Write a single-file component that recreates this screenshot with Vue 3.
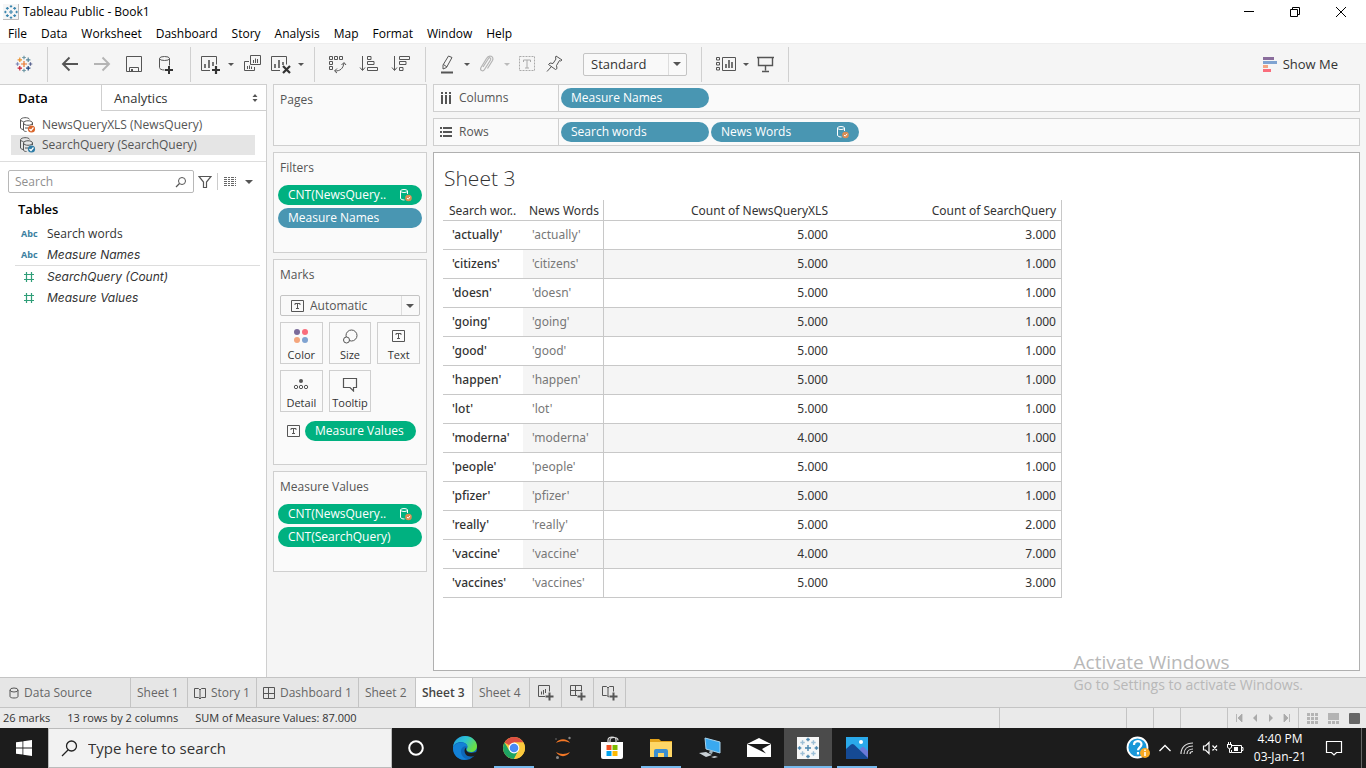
<script setup>
import { ref } from 'vue'

const menus = ['File', 'Data', 'Worksheet', 'Dashboard', 'Story', 'Analysis', 'Map', 'Format', 'Window', 'Help']
const fit = ref('Standard')
const markType = ref('Automatic')
const search = ref('')
const taskSearch = ref('')

const rows = [
  ['actually', '5.000', '3.000'],
  ['citizens', '5.000', '1.000'],
  ['doesn', '5.000', '1.000'],
  ['going', '5.000', '1.000'],
  ['good', '5.000', '1.000'],
  ['happen', '5.000', '1.000'],
  ['lot', '5.000', '1.000'],
  ['moderna', '4.000', '1.000'],
  ['people', '5.000', '1.000'],
  ['pfizer', '5.000', '1.000'],
  ['really', '5.000', '2.000'],
  ['vaccine', '4.000', '7.000'],
  ['vaccines', '5.000', '3.000']
]

const sheets = [
  { name: 'Sheet 1' },
  { name: 'Story 1', icon: 'story' },
  { name: 'Dashboard 1', icon: 'dashboard' },
  { name: 'Sheet 2' },
  { name: 'Sheet 3', active: true },
  { name: 'Sheet 4' }
]

const logo = [
  { x: 12, y: 12, r: 3, c: '#e8762c' },
  { x: 12, y: 5.5, r: 1.8, c: '#7199a6' },
  { x: 12, y: 18.5, r: 1.8, c: '#7199a6' },
  { x: 5.5, y: 12, r: 1.8, c: '#7b84b5' },
  { x: 18.5, y: 12, r: 1.8, c: '#5b6591' },
  { x: 7.8, y: 7.8, r: 2.2, c: '#eb912b' },
  { x: 16.2, y: 7.8, r: 2.2, c: '#59879b' },
  { x: 7.8, y: 16.2, r: 2.2, c: '#c72035' },
  { x: 16.2, y: 16.2, r: 2.2, c: '#1f447e' }
]
const wideLogo = logo.map((p) => ({ ...p, x: 12 + (p.x - 12) * 1.3, y: 12 + (p.y - 12) * 1.3 }))
const plus = (p) => `M${p.x - p.r} ${p.y}h${p.r * 2}M${p.x} ${p.y - p.r}v${p.r * 2}`
</script>

<template>
  <div class="window">
    <header class="titlebar">
      <svg class="app-icon" viewBox="0 0 24 24" width="16" height="16"><path d="M0 0h23v23H0z" fill="#f6f6f6" /><path d="M0 23.300h23.300V0" fill="none" stroke="#b5b5b5" stroke-width="1.400" /><path v-for="(p, i) in wideLogo" :key="i" :d="plus(p)" stroke="#3b86ae" stroke-width="1.700" /></svg>
      <h1>Tableau Public - Book1</h1>
      <div class="win-buttons">
        <button aria-label="Minimize"><svg viewBox="0 0 12 12" width="12" height="12"><path d="M1 5.500h10" stroke="#000" /></svg></button>
        <button aria-label="Restore"><svg viewBox="0 0 12 12" width="12" height="12"><path d="M1.500 3.500h7v7h-7zM3.500 3.500v-2h7v7h-2" fill="none" stroke="#000" /></svg></button>
        <button aria-label="Close"><svg viewBox="0 0 12 12" width="12" height="12"><path d="M1 1l10 10M11 1L1 11" stroke="#000" /></svg></button>
      </div>
    </header>

    <nav class="menubar"><button v-for="m in menus" :key="m">{{ m }}</button></nav>

    <div class="toolbar">
      <div class="group start">
        <button class="tool" aria-label="Start page"><svg viewBox="0 0 24 24"><path v-for="(p, i) in logo" :key="i" :d="plus(p)" :stroke="p.c" stroke-width="1.2" /></svg></button>
      </div>
      <div class="group even">
        <button class="tool" aria-label="Undo"><svg viewBox="0 0 24 24"><path d="M20 12H5M11.500 5.500L5 12l6.500 6.500" class="l" stroke-width="1.900" /></svg></button>
        <button class="tool" aria-label="Redo"><svg viewBox="0 0 24 24"><path d="M4 12h15M12.500 5.500L19 12l-6.500 6.500" fill="none" stroke="#b4b4b4" stroke-width="1.900" /></svg></button>
        <button class="tool" aria-label="Save"><svg viewBox="0 0 24 24"><path d="M4.500 4.500h15v15h-15zM7.500 19.500v-4h9v4" class="l" /><path d="M9 17h2v3H9z" fill="#555" /></svg></button>
        <button class="tool" aria-label="New data source"><svg viewBox="0 0 24 24"><path d="M5.500 6.500v9c0 1.500 2 2.500 5 2.500M15.500 6.500v7M5.500 6.500a5 2 0 0 0 10 0a5 2 0 0 0-10 0z" class="l" /><path d="M15 14v8M11 18h8" stroke="#333" stroke-width="2" /></svg></button>
      </div>
      <div class="group sheets-tools">
        <button class="tool" aria-label="New worksheet"><svg viewBox="0 0 24 24"><path d="M12 18.500H3.500v-14h15v8" class="l" /><path d="M7 12v4M11 8v8M15 10v4" stroke="#555" stroke-width="1.600" /><path d="M18 14v8M14 18h8" stroke="#333" stroke-width="2.200" /></svg></button>
        <button class="caret" aria-label="New worksheet options"></button>
        <button class="tool" aria-label="Duplicate"><svg viewBox="0 0 24 24"><path d="M10.500 3.500h10v9h-10zM9 9.500H4.500v9h10V15" class="l" /><path d="M13.500 8v3M15.500 6.500V11M17.500 7v4M7.500 14v3M9.500 13.500V17M11.500 14.500V17" stroke="#555" /></svg></button>
        <button class="tool" aria-label="Clear sheet"><svg viewBox="0 0 24 24"><path d="M12 18.500H3.500v-14h15v8" class="l" /><path d="M7 12v4M11 8v8M15 10v3" stroke="#555" stroke-width="1.600" /><path d="M15 14l7 7M22 14l-7 7" stroke="#333" stroke-width="2.200" /></svg></button>
        <button class="caret" aria-label="Clear options"></button>
      </div>
      <div class="group even">
        <button class="tool" aria-label="Swap rows and columns"><svg viewBox="0 0 24 24"><path d="M4.500 4.500h3v3h-3zM9.500 4.500h3v3h-3zM14.500 4.500h3v3h-3zM4.500 9.500h3v3h-3zM4.500 14.500h3v3h-3zM10 19c5 0 8-2 9-8M16.500 13l2.500-2.500 2 2.500M12 16.500L9.500 19l2.500 2" class="l" /></svg></button>
        <button class="tool" aria-label="Sort ascending"><svg viewBox="0 0 24 24"><path d="M5.500 4v14M3 15.500L5.500 18.500 8 15.500M10.500 4.500H14v3h-3.500zM10.500 9.500H17v3h-6.500zM10.500 15.500H20.500v3h-10z" class="l" /></svg></button>
        <button class="tool" aria-label="Sort descending"><svg viewBox="0 0 24 24"><path d="M5.500 4v14M3 15.500L5.500 18.500 8 15.500M10.500 4.500H20.500v3h-10zM10.500 9.500H17v3h-6.500zM10.500 15.500H14v3h-3.500z" class="l" /></svg></button>
      </div>
      <div class="group format-tools">
        <button class="tool" aria-label="Highlight"><svg viewBox="0 0 24 24"><path d="M13.500 4l3.500 1.500-5.500 10-3.500 1.500v-4zM8.500 12.500l3.500 2.500" class="l" /><path d="M6 20.500h12" stroke="#555" stroke-width="2" /></svg></button>
        <button class="caret" aria-label="Highlight options"></button>
        <button class="tool" aria-label="Group members"><svg viewBox="0 0 24 24"><path d="M8 15l5.500-8.500c1-1.500 3-.500 2 1.500l-6 9.500c-1.500 2.500-5 1-3.500-2L11.500 6.500c2.500-4.500 8-2 6 2l-5 8" fill="none" stroke="#b4b4b4" stroke-width="1.200" /></svg></button>
        <button class="caret dim" aria-label="Group options"></button>
        <button class="tool" aria-label="Show mark labels"><svg viewBox="0 0 24 24"><path d="M4.500 4.500h15v14h-15z" fill="none" stroke="#aaa" stroke-dasharray="2 1" /><path d="M8.500 10V8h7v2M12 8v8M10 16h4" fill="none" stroke="#aaa" /></svg></button>
        <button class="tool" aria-label="Fix axes"><svg viewBox="0 0 24 24"><path d="M14 4l6 4-1.500 1-1-.500-3 5 .500 3-1.500 1-7-5 1.500-1.500 3 .500 3-4.500-.500-1zM9.500 14.500L5 19.500" class="l" /></svg></button>
        <label class="combo fit"><select v-model="fit" aria-label="Fit"><option>Standard</option><option>Entire View</option></select></label>
      </div>
      <div class="group view-tools">
        <button class="tool wide" aria-label="Show cards"><svg viewBox="0 0 26 24"><path d="M3.500 5.500h3v2.500h-3zM3.500 10.500h3V13h-3zM3.500 15.500h3V18h-3zM9.500 5.500h13v13h-13z" class="l" /><path d="M13 12v4M16 8v8M19 10v6" stroke="#555" stroke-width="1.600" /></svg></button>
        <button class="caret" aria-label="Card options"></button>
        <button class="tool" aria-label="Presentation mode"><svg viewBox="0 0 24 24"><path d="M4 5.500h17M5.500 5.500v8h14v-8M12.500 13.500v5M9 19.500h7" class="l" stroke-width="1.400" /></svg></button>
      </div>
      <button class="show-me"><svg viewBox="0 0 14 15" width="14" height="15"><path d="M0 0h11v3H0z" fill="#8a6d9c" /><path d="M0 4h14v3H0z" fill="#7fa3d1" /><path d="M0 8h5v3H0z" fill="#f4a582" /><path d="M0 12h8v3H0z" fill="#fa6d7c" /></svg>Show Me</button>
    </div>

    <main class="workspace">
      <aside class="data-pane">
        <div class="pane-tabs">
          <button class="on">Data</button>
          <button class="off">Analytics<svg viewBox="0 0 6 8" width="6" height="8"><path d="M3 0l2.500 3h-5zM3 8l2.500-3h-5z" fill="#555" /></svg></button>
        </div>
        <div class="sources">
          <button v-for="(s, i) in ['NewsQueryXLS (NewsQuery)', 'SearchQuery (SearchQuery)']" :key="s" :class="{ selected: i === 1 }">
            <svg viewBox="0 0 18 18" width="18" height="18"><path d="M4 13.500C2.500 13 1.500 12.500 1.500 12V4c0-3 9-3 9-.500M1.500 4c.500 1 2 1.500 3 1.500M4.500 7c0-3 9-3 9 0s-9 3-9 0zM4.500 7v7c0 1 1.500 1.500 3 1.500M13.500 7v2M6 12h3" fill="none" stroke="#555" /><circle cx="12.500" cy="13" r="3.600" :fill="i ? '#2e7ca6' : '#d9652b'" /><path d="M10.500 13l1.500 1.500 2.500-3" fill="none" stroke="#fff" stroke-width="1.200" /></svg>{{ s }}
          </button>
        </div>
        <div class="find">
          <div class="find-box">
            <input v-model="search" type="text" placeholder="Search" aria-label="Search fields" />
            <svg viewBox="0 0 12 12" width="12" height="12"><circle cx="7" cy="5" r="3.500" fill="none" stroke="#555" /><path d="M4.500 7.500L1 11" stroke="#555" stroke-width="1.300" /></svg>
          </div>
          <button class="funnel" aria-label="Filter"><svg viewBox="0 0 14 14" width="14" height="14"><path d="M1 1.500h12L8.500 7v5.500h-3V7z" fill="none" stroke="#555" stroke-width="1.200" /></svg></button>
          <button class="list-view" aria-label="View"><svg viewBox="0 0 12 11" width="12" height="11"><path d="M0 1.500h12M0 3.500h12M0 5.500h12M0 7.500h12M0 9.500h12" stroke="#666" stroke-dasharray="3 1 2 1" /></svg></button>
          <button class="caret" aria-label="View options"></button>
        </div>
        <h2>Tables</h2>
        <ul class="fields">
          <li><b class="abc">Abc</b>Search words</li>
          <li><b class="abc">Abc</b><i>Measure Names</i></li>
        </ul>
        <ul class="fields measures">
          <li v-for="f in ['SearchQuery (Count)', 'Measure Values']" :key="f">
            <svg viewBox="0 0 16 12" width="16" height="12"><path d="M3 3.500h10M3 8.500h10M5.500 1v10M10.500 1v10" stroke="#2f9e78" stroke-width="1.200" /></svg><i>{{ f }}</i>
          </li>
        </ul>
      </aside>

      <section class="cards">
        <div class="card pages"><h3>Pages</h3></div>
        <div class="card filters">
          <h3>Filters</h3>
          <div class="pills">
            <button class="pill green">CNT(NewsQuery..<svg viewBox="0 0 14 14" width="14" height="14"><path d="M1.500 3v7c0 1.500 2 2 4 2M8.500 3v3M1.500 3a3.500 1.500 0 0 0 7 0a3.500 1.500 0 0 0-7 0z" fill="none" stroke="#fff" /><circle cx="9.500" cy="10" r="3.300" fill="#d98d54" /><path d="M8 10l1.200 1.200 2-2.400" fill="none" stroke="#fff" /></svg></button>
            <button class="pill blue">Measure Names</button>
          </div>
        </div>
        <div class="card marks">
          <h3>Marks</h3>
          <label class="combo mark-type">
            <svg class="t-icon" viewBox="0 0 13 12" width="13" height="12"><path d="M.500.500h12v11H.500zM4 5V3.500h5V5M6.500 3.500v5M5 8.500h3" class="l" /></svg>
            <select v-model="markType" aria-label="Mark type"><option>Automatic</option><option>Text</option></select>
          </label>
          <div class="mark-grid">
            <button><svg viewBox="0 0 18 16"><circle cx="5" cy="4" r="3" fill="#7b6b9a" /><circle cx="13" cy="4" r="3" fill="#fa6d7c" /><circle cx="5" cy="12" r="3" fill="#f4a57c" /><circle cx="13" cy="12" r="3" fill="#7fa3d1" /></svg>Color</button>
            <button><svg viewBox="0 0 18 16"><circle cx="10.500" cy="7.500" r="5.500" class="l" /><circle cx="5.500" cy="12" r="3" fill="#fafafa" stroke="#555" /></svg>Size</button>
            <button><svg viewBox="0 0 18 16"><path d="M2.500 2.500h12v11h-12zM6 7V5.500h5V7M8.500 5.500v5M7 10.500h3" class="l" /></svg>Text</button>
            <button><svg viewBox="0 0 18 16"><circle cx="9" cy="5" r="2" fill="#555" /><circle cx="4" cy="11" r="1.700" class="l" /><circle cx="9" cy="11" r="1.700" class="l" /><circle cx="14" cy="11" r="1.700" class="l" /></svg>Detail</button>
            <button><svg viewBox="0 0 18 16"><path d="M2.500 2.500h13v9h-3v3.500L9 11.500H2.500z" class="l" stroke-width="1.200" /></svg>Tooltip</button>
          </div>
          <div class="mark-row">
            <svg class="t-icon" viewBox="0 0 13 12" width="13" height="12"><path d="M.500.500h12v11H.500zM4 5V3.500h5V5M6.500 3.500v5M5 8.500h3" class="l" /></svg>
            <button class="pill green">Measure Values</button>
          </div>
        </div>
        <div class="card filters">
          <h3>Measure Values</h3>
          <div class="pills">
            <button class="pill green">CNT(NewsQuery..<svg viewBox="0 0 14 14" width="14" height="14"><path d="M1.500 3v7c0 1.500 2 2 4 2M8.500 3v3M1.500 3a3.500 1.500 0 0 0 7 0a3.500 1.500 0 0 0-7 0z" fill="none" stroke="#fff" /><circle cx="9.500" cy="10" r="3.300" fill="#d98d54" /><path d="M8 10l1.200 1.200 2-2.400" fill="none" stroke="#fff" /></svg></button>
            <button class="pill green">CNT(SearchQuery)</button>
          </div>
        </div>
      </section>

      <section class="canvas">
        <div class="shelf">
          <div class="shelf-name"><svg viewBox="0 0 12 12" width="12" height="12"><path d="M2 0v12M6 0v12M10 0v12" stroke="#555" stroke-width="2" /><path d="M0 2.500h12" stroke="#fafafa" /></svg>Columns</div>
          <button class="pill blue">Measure Names</button>
        </div>
        <div class="shelf">
          <div class="shelf-name"><svg viewBox="0 0 12 12" width="12" height="12"><path d="M0 2h12M0 6h12M0 10h12" stroke="#555" stroke-width="2" /><path d="M2.500 0v12" stroke="#fafafa" /></svg>Rows</div>
          <button class="pill blue">Search words</button>
          <button class="pill blue">News Words<svg viewBox="0 0 14 14" width="14" height="14"><path d="M1.500 3v7c0 1.500 2 2 4 2M8.500 3v3M1.500 3a3.500 1.500 0 0 0 7 0a3.500 1.500 0 0 0-7 0z" fill="none" stroke="#fff" /><circle cx="9.500" cy="10" r="3.300" fill="#d98d54" /><path d="M8 10l1.200 1.200 2-2.400" fill="none" stroke="#fff" /></svg></button>
        </div>
        <div class="sheet">
          <h2>Sheet 3</h2>
          <table>
            <colgroup><col class="c-word" /><col class="c-news" /><col class="c-num" /><col class="c-num" /></colgroup>
            <thead><tr><th>Search wor..</th><th>News Words</th><th>Count of NewsQueryXLS</th><th>Count of SearchQuery</th></tr></thead>
            <tbody>
              <tr v-for="r in rows" :key="r[0]"><th scope="row">'{{ r[0] }}'</th><td>'{{ r[0] }}'</td><td>{{ r[1] }}</td><td>{{ r[2] }}</td></tr>
            </tbody>
          </table>
        </div>
      </section>
    </main>

    <nav class="sheet-tabs">
      <button class="source"><svg viewBox="0 0 10 12" width="10" height="12"><path d="M1 3v6.500c0 2 8 2 8 0V3M1 3a4 2 0 0 0 8 0a4 2 0 0 0-8 0z" class="l" /></svg>Data Source</button>
      <button v-for="s in sheets" :key="s.name" :class="{ active: s.active }">
        <svg v-if="s.icon === 'story'" viewBox="0 0 12 12" width="12" height="12"><path d="M.500 1.500h4L6 3l1.500-1.500h4v9h-4L6 12l-1.500-1.500h-4zM6 3v9" class="l" /></svg>
        <svg v-if="s.icon === 'dashboard'" viewBox="0 0 12 12" width="12" height="12"><path d="M.500.500h11v11H.500zM5.500.500v11M.500 6.500h11" class="l" /></svg>{{ s.name }}
      </button>
      <button class="new" aria-label="New worksheet"><svg viewBox="0 0 16 16" width="16" height="16"><path d="M7 11.500H.500v-11h11v6M3.500 6.500v3M5.500 5v4.500M7.500 4v4" class="l" /><path d="M11.500 7.500v8M7.500 11.500h8" stroke="#555" stroke-width="2" /></svg></button>
      <button class="new" aria-label="New dashboard"><svg viewBox="0 0 16 16" width="16" height="16"><path d="M7 10.500H.500V.500h11v6M5.500.500v10M.500 5.500h11" class="l" /><path d="M11.500 7.500v8M7.500 11.500h8" stroke="#555" stroke-width="2" /></svg></button>
      <button class="new" aria-label="New story"><svg viewBox="0 0 16 16" width="16" height="16"><path d="M7 12L4.500 10.500h-4v-9h4L6 3l1.500-1.500h4v5M6 3v8" class="l" /><path d="M11.500 7.500v8M7.500 11.500h8" stroke="#555" stroke-width="2" /></svg></button>
    </nav>

    <footer class="status">
      <span>26 marks</span><span>13 rows by 2 columns</span><span>SUM of Measure Values: 87.000</span>
      <div class="slots"><i class="s1"></i><i class="s2"></i><i class="s2"></i><i class="s3"></i></div>
      <div class="pager">
        <button aria-label="First"><svg viewBox="0 0 8 8"><path d="M1.500 0v8M7 0L3 4l4 4z" fill="#aaa" stroke="#aaa" stroke-width=".800" /></svg></button>
        <button aria-label="Previous"><svg viewBox="0 0 8 8"><path d="M6 0L2 4l4 4z" fill="#aaa" /></svg></button>
        <button aria-label="Next"><svg viewBox="0 0 8 8"><path d="M2 0l4 4-4 4z" fill="#aaa" /></svg></button>
        <button aria-label="Last"><svg viewBox="0 0 8 8"><path d="M6.500 0v8M1 0l4 4-4 4z" fill="#aaa" stroke="#aaa" stroke-width=".800" /></svg></button>
      </div>
      <div class="views">
        <button aria-label="Sheet sorter"><svg viewBox="0 0 11 11"><path d="M0 1.500h11M0 5.500h11M0 9.500h11" stroke="#b4b4b4" stroke-width="3" stroke-dasharray="3 1" /></svg></button>
        <button aria-label="Filmstrip"><svg viewBox="0 0 11 11"><path d="M0 0h11v7H0z" fill="#b4b4b4" /><path d="M0 9.500h11" stroke="#b4b4b4" stroke-width="3" stroke-dasharray="3 1" /></svg></button>
        <button aria-label="Show tabs"><svg viewBox="0 0 11 11"><rect width="11" height="11" rx="1" fill="#666" /></svg></button>
      </div>
    </footer>

    <footer class="taskbar">
      <button class="win" aria-label="Start"><svg viewBox="0 0 16 16" width="16" height="16"><path d="M0 2.300L6.500 1.400v6.200H0zM7.300 1.300L16 0v7.600H7.300zM0 8.400h6.500v6.200L0 13.700zM7.300 8.400H16V16l-8.700-1.300z" fill="#fff" /></svg></button>
      <label class="task-search">
        <svg viewBox="0 0 17 17" width="17" height="17"><circle cx="10.500" cy="6" r="5" fill="none" stroke="#222" stroke-width="1.300" /><path d="M7 10L1 16" stroke="#222" stroke-width="1.300" /></svg>
        <input v-model="taskSearch" type="text" placeholder="Type here to search" aria-label="Type here to search" />
      </label>
      <div class="apps">
        <button class="cortana" aria-label="Cortana"><svg viewBox="0 0 24 24"><circle cx="12" cy="12" r="6.800" fill="none" stroke="#fff" stroke-width="2" /></svg></button>
        <button aria-label="Edge"><svg viewBox="0 0 24 24">
          <defs><linearGradient id="eg" x1="0" y1="0" x2="1" y2=".500"><stop offset="0" stop-color="#2699dc" /><stop offset=".500" stop-color="#2cc3d5" /><stop offset="1" stop-color="#6be043" /></linearGradient></defs>
          <circle cx="12" cy="12" r="12" fill="#0e67b8" />
          <path d="M0 11C1 4 6 0 12 0c7 0 12 5 12 10 0 4-3 6-6 6-3 0-4.500-1-4.500-2.200 0-.800 1-1.200 1-3C14.500 8 11 6 7.500 6 4 6 1 8.500 0 11z" fill="url(#eg)" />
          <path d="M0 11C2 8 5 6.500 8 6.500c3.500 0 6.500 2 6.500 4.500-2-2-7 0-6.500 5 .300 3.500 3 7 7 7-9 3-15.500-4-15-12z" fill="#1381d6" />
          <path d="M24 18.500c-2 1.500-4 2-6.500 2-4 0-6-3-6-6 0-1 .500-2 1.500-3-.500 5 4 7 11 4z" fill="#1d1d1d" /></svg></button>
        <button class="running" aria-label="Chrome"><svg viewBox="0 0 24 24">
          <circle cx="12" cy="12" r="11" fill="#fbc93d" /><path d="M12 12L2.500 6.500A11 11 0 0 1 21.500 6.500H12z" fill="#dd4f42" /><path d="M2.500 6.500A11 11 0 0 0 12 23l4.500-8.500L12 12 7 14z" fill="#1ea463" /><path d="M21.500 6.500H12v5l4.500 3L12 23A11 11 0 0 0 21.500 6.500z" fill="#fbc93d" /><circle cx="12" cy="12" r="5.400" fill="#fff" /><circle cx="12" cy="12" r="4.300" fill="#4a8af4" /></svg></button>
        <button aria-label="Jupyter"><svg viewBox="0 0 24 24"><path d="M5 7c3-5 11-5 14 0-4-2.500-10-2.500-14 0zM5 16c4 2.500 10 2.500 14 0-3 5.500-11 5.500-14 0z" fill="#f37726" /><circle cx="18.500" cy="2" r="1.200" fill="#888" /><circle cx="5" cy="3" r=".800" fill="#777" /><circle cx="6.500" cy="21.500" r="1.500" fill="#888" /></svg></button>
        <button aria-label="Store"><svg viewBox="0 0 24 24"><path d="M1 6h22v15a2 2 0 0 1-2 2H3a2 2 0 0 1-2-2z" fill="#fff" /><path d="M8 7V4c0-4 8-4 8 0v3M10 7V4.500c0-4 8-4 8 0" fill="none" stroke="#ddd" stroke-width="1.200" /><path d="M6.500 9h5v5h-5z" fill="#f25022" /><path d="M12.500 9h5v5h-5z" fill="#7fba00" /><path d="M6.500 15h5v5h-5z" fill="#00a4ef" /><path d="M12.500 15h5v5h-5z" fill="#ffb900" /></svg></button>
        <button class="running" aria-label="File Explorer"><svg viewBox="0 0 24 24"><path d="M1 3h9l2 2h11v16H1z" fill="#e3a21a" /><path d="M1 6h22v15H1z" fill="#ffd766" /><path d="M5 21v-6a2 2 0 0 1 2-2h10a2 2 0 0 1 2 2v6h-4v-4H9v4z" fill="#3c8fd0" /></svg></button>
        <button aria-label="Remote computer"><svg viewBox="0 0 24 24"><path d="M7 2l15 4v11L8 13z" fill="#3aa9f0" stroke="#a9d4ee" /><path d="M12 14l3 1-1 3-3-1z" fill="#9fb0bb" /><path d="M1 17l7-1 6 3-6 2zM13 21l4-1 3 1-4 1z" fill="#c9d0d5" /></svg></button>
        <button aria-label="Mail"><svg viewBox="0 0 24 24"><path d="M0 8l12-6 12 6v13H0z" fill="#fff" /><path d="M0 8h24l-9 5 4 4.500z" fill="#1b1b1b" /></svg></button>
        <button class="current" aria-label="Tableau"><svg viewBox="0 0 24 24"><path d="M1 1h22v22H1z" fill="#f7f7f7" /><path v-for="(p, i) in wideLogo" :key="i" :d="plus(p)" :stroke="i > 4 ? '#9dbfd6' : '#4a86ae'" stroke-width="1.400" /></svg></button>
        <button class="running" aria-label="Photos"><svg viewBox="0 0 24 24"><path d="M1 1h22v22H1z" fill="#2aa9ea" /><path d="M12 16l5-5c1-1 2 0 6 4v8H12z" fill="#6a7ad8" /><path d="M1 13l5-4.500c1-.800 2-.800 3 0L23 22v1H1z" fill="#154a94" /><circle cx="16" cy="6" r="2" fill="#fff" /></svg></button>
      </div>
      <div class="tray">
        <svg viewBox="0 0 24 24" width="24" height="24"><circle cx="11.500" cy="11.500" r="10" fill="#1897d8" stroke="#fff" stroke-width="1.800" /><path d="M8 9c0-5 7.500-5 7.500-.700 0 3-3.500 3-3.500 6M12 16v2.500" fill="none" stroke="#fff" stroke-width="2.200" /><circle cx="19" cy="17" r="5" fill="#f7a823" /><path d="M19 13.500v1.500M19 16v4" stroke="#fff" stroke-width="1.500" /></svg>
        <svg viewBox="0 0 14 14" width="14" height="14"><path d="M1.500 10L7 4.500l5.500 5.500" fill="none" stroke="#fff" stroke-width="1.300" /></svg>
        <svg viewBox="0 0 14 14" width="14" height="14"><path d="M1 13C1 6 6 2 13 2M4 13c0-5 3.500-8 9-8M7 13c0-3 2.500-5 6-5M10 13c0-1.500 1-2.500 3-2.500" fill="none" stroke="#ddd" stroke-width="1.200" /></svg>
        <svg viewBox="0 0 16 14" width="16" height="14"><path d="M1.500 5h2L7 1.500v11L3.500 9h-2zM10.500 4.500l4.500 5M15 4.500l-4.500 5" fill="none" stroke="#fff" stroke-width="1.200" /></svg>
        <svg viewBox="0 0 18 14" width="18" height="14"><path d="M6 4.500h9.500v7h-10V9M15.500 6.500h1.500v3h-1.500M1.500 3v3c0 2 4 2 4 0V3M1 3.500h5M2.500 1v2M4.500 1v2M3.500 8v3.500h2" fill="none" stroke="#fff" /><path d="M8 6h4v4H8z" fill="#fff" /></svg>
        <div class="clock"><time>4:40 PM</time><time>03-Jan-21</time></div>
        <button class="note" aria-label="Notifications"><svg viewBox="0 0 18 18" width="18" height="18"><path d="M1.500 2.500h15v11h-5L9 16l-2.500-2.500h-5z" fill="none" stroke="#fff" stroke-width="1.200" /></svg></button>
        <span class="peek"></span>
      </div>
    </footer>

    <div class="watermark"><p class="big">Activate Windows</p><p>Go to Settings to activate Windows.</p></div>
  </div>
</template>

<style>
body { margin: 0; }
</style>

<style scoped>
* { box-sizing: border-box; }
.window { position: relative; display: flex; flex-direction: column; min-height: 100vh; background: #f5f5f5; color: #333; font: 12px/20px "Open Sans", "Noto Sans", sans-serif; }
button, input, select { margin: 0; padding: 0; border: 0; background: none; color: inherit; font: inherit; }
h1, h2, h3, p, ul { margin: 0; padding: 0; font-weight: 400; list-style: none; }
svg { display: block; flex: none; }
.l { fill: none; stroke: #555; }

.titlebar { display: flex; align-items: center; height: 23px; padding-left: 3px; gap: 4px; background: #fff; color: #000; }
.titlebar h1 { font-size: 12px; }
.win-buttons { display: flex; margin-left: auto; padding-right: 2px; }
.win-buttons button { display: flex; justify-content: center; width: 46px; }
.menubar { display: flex; gap: 14px; height: 20px; padding: 1px 8px 0; line-height: 19px; background: #fff; color: #000; }

.toolbar { display: flex; align-items: center; height: 41px; border-top: 1px solid #eee; }
.group { display: flex; align-items: center; height: 35px; border-right: 1px solid #d0d0d0; }
.tool { flex: none; width: 24px; }
.tool svg { width: 24px; height: 24px; }
.tool.wide, .tool.wide svg { width: 26px; }
.start { padding: 0 11px 0 12px; }
.even { gap: 8px; padding: 0 12px 0 10px; }
.sheets-tools { gap: 4px; padding: 0 8px 0 7px; }
.format-tools { gap: 3px; padding: 0 14px 0 9px; }
.view-tools { gap: 2px; padding: 0 11px; }
.caret { flex: none; display: flex; justify-content: center; width: 10px; }
.caret::before, .combo::after { content: ""; border: 3px solid transparent; border-top: 3px solid #555; border-bottom: 0; }
.caret.dim::before { border-top-color: #bbb; }
.combo { position: relative; display: flex; align-items: center; border: 1px solid #c4c4c4; border-radius: 2px; background: #f9f9f9; }
.combo select { flex: 1; min-width: 0; height: 100%; appearance: none; }
.combo::after { position: absolute; right: 5px; border-width: 4px 4px 0; }
.fit { width: 104px; height: 23px; margin-left: 14px; font-size: 13px; }
.fit select { padding-left: 7px; background: linear-gradient(#ddd, #ddd) right 17px top / 1px 100% no-repeat; }
.show-me { display: flex; align-items: center; gap: 6px; margin-left: auto; margin-right: 28px; font-size: 13px; }

.workspace { flex: 1; display: flex; gap: 6px; padding-right: 6px; }
.data-pane { flex: none; width: 267px; border: solid #cfcfcf; border-width: 1px 1px 0 0; background: #fff; }
.pane-tabs { display: flex; height: 26px; font-size: 13px; }
.pane-tabs button { display: flex; align-items: center; }
.on { width: 101px; padding-left: 18px; color: #000; font-weight: 600; }
.pane-tabs .off { flex: 1; justify-content: space-between; padding: 0 8px 0 12px; border: solid #cfcfcf; border-width: 0 0 1px 1px; }
.sources { padding: 4px 11px 6px; border-bottom: 1px solid #ddd; }
.sources button { display: flex; align-items: center; gap: 5px; width: 100%; height: 20px; padding-left: 8px; color: #555; }
.sources .selected { background: #e5e5e5; }
.find { display: flex; align-items: center; padding: 8px 10px 5px 8px; }
.find-box { flex: 1; display: flex; align-items: center; height: 23px; padding: 0 6px; border: 1px solid #b8b8b8; border-radius: 2px; }
.find-box input { flex: 1; min-width: 0; outline: 0; }
input::placeholder { color: #8f8f8f; opacity: 1; }
.funnel { width: 22px; padding-left: 4px; }
.list-view { margin-left: 1px; padding: 3px 6px; border-left: 1px solid #ccc; }
.find .caret { width: 14px; }
.find .caret::before { border-width: 4px 4px 0; }
.data-pane h2 { padding: 1px 18px 3px; color: #000; font-size: 13px; font-weight: 600; }
.fields { margin: 0 6px 0 15px; padding-top: 1px; }
.fields li { display: flex; align-items: center; height: 21px; gap: 10px; padding-left: 6px; }
.fields i { font-family: Inter, sans-serif; }
.abc { width: 16px; color: #3b7f9f; font-size: 9px; }
.measures { padding-top: 0; border-top: 1px solid #ddd; }

.cards { flex: none; display: flex; flex-direction: column; gap: 6px; width: 154px; }
.card { padding: 5px 4px; border: 1px solid #cfcfcf; background: #fafafa; }
.card h3 { padding: 0 2px; color: #555; font-size: 12px; }
.pages { height: 62px; }
.filters { height: 101px; }
.marks { height: 206px; }
.pills { display: flex; flex-direction: column; gap: 3px; padding-top: 7px; }
.pill { display: flex; align-items: center; justify-content: space-between; height: 20px; padding: 0 9px 0 10px; border-radius: 10px; color: #fff; font-weight: 500; }
.green { background: #00b180; }
.blue { background: #4996b2; }
.mark-type { height: 21px; margin: 10px 2px 6px; padding-left: 10px; color: #555; }
.mark-type select { padding-left: 6px; background: linear-gradient(#ddd, #ddd) right 17px top / 1px 100% no-repeat; }
.mark-grid { display: grid; grid-template-columns: repeat(3, 1fr); gap: 6px; margin: 0 2px; }
.mark-grid button { display: flex; flex-direction: column; align-items: center; gap: 2px; height: 42px; padding-top: 5px; border: 1px solid #cfcfcf; font-size: 11px; line-height: 18px; }
.mark-grid svg { width: 18px; height: 16px; }
.mark-row { display: flex; align-items: center; gap: 5px; padding: 9px 6px 0 9px; }
.mark-row .pill { flex: 1; }

.canvas { flex: 1; min-width: 0; display: flex; flex-direction: column; gap: 6px; }
.shelf { display: flex; align-items: center; gap: 2px; height: 28px; border: 1px solid #cfcfcf; background: #fafafa; }
.shelf-name { display: flex; align-items: center; gap: 7px; width: 125px; height: 100%; padding-left: 6px; border-right: 1px solid #cfcfcf; color: #555; }
.shelf .pill { width: 148px; }
.sheet { flex: 1; margin-bottom: 6px; padding: 12px 9px; border: 1px solid #b0b0b0; background: #fff; }
.sheet h2 { padding-left: 1px; margin-bottom: 8px; font-size: 21px; font-weight: 300; line-height: 27px; }
table { width: 619px; border-collapse: separate; border-spacing: 0; table-layout: fixed; font-family: "Noto Sans", sans-serif; }
.c-word { width: 80px; }
.c-news { width: 81px; }
th, td { height: 29px; padding: 0 5px 0 9px; border-bottom: 1px solid #c8c8c8; text-align: left; font-weight: 400; white-space: nowrap; }
thead th { height: 21px; padding-left: 6px; line-height: 18px; vertical-align: bottom; }
tbody th { font-weight: 500; }
td:nth-child(2) { color: #777; }
th:nth-child(2), td:nth-child(2), th:nth-child(4), td:nth-child(4) { border-right: 1px solid #c8c8c8; }
th:nth-child(n + 3), td:nth-child(n + 3) { text-align: right; }
thead th:nth-child(-n + 2) { padding-right: 0; }
tbody tr:nth-child(even) td { background: #f5f5f5; }

.sheet-tabs { display: flex; height: 31px; border: solid #c4c4c4; border-width: 1px 0; background: #e6e6e6; color: #666; }
.sheet-tabs button { display: flex; align-items: center; gap: 5px; min-width: 57px; padding: 0 6px; border-right: 1px solid #c4c4c4; }
.sheet-tabs .source { width: 131px; padding-left: 9px; }
.sheet-tabs .active { background: #fafafa; color: #444; font-weight: 600; }
.sheet-tabs .new { width: 32px; min-width: 0; padding-left: 8px; }
.status { display: flex; align-items: center; gap: 17px; height: 20px; padding-left: 3px; background: #eaeaea; font-size: 11px; }
.slots { display: flex; align-self: stretch; margin-left: auto; margin-right: -17px; }
.slots i { border-left: 1px solid #c4c4c4; }
.s1 { width: 127px; }
.s2 { width: 27px; }
.s3 { width: 47px; }
.pager, .views { display: flex; align-items: center; align-self: stretch; border-left: 1px solid #c4c4c4; }
.pager { gap: 8px; width: 71px; padding-left: 7px; margin-right: -17px; }
.pager svg { width: 8px; height: 8px; }
.views { gap: 10px; width: 68px; padding-left: 8px; }
.views svg { width: 11px; height: 11px; }

.taskbar { display: flex; align-items: center; height: 40px; background: #1c1c1c; color: #fff; }
.win { display: flex; justify-content: center; width: 48px; }
.task-search { display: flex; align-items: center; gap: 10px; width: 344px; height: 40px; padding-left: 12px; border: 1px solid #bbb; background: #f2f2f2; color: #222; font-size: 15px; }
.task-search input { flex: 1; min-width: 0; outline: 0; }
.task-search input::placeholder { color: #333; }
.apps { display: flex; gap: 1px; height: 40px; }
.apps button { position: relative; display: flex; align-items: center; justify-content: center; width: 48px; }
.apps svg { width: 24px; height: 24px; }
.current { background: #4b4b4b; }
.running::after, .current::after { content: ""; position: absolute; right: 4px; bottom: 0; left: 4px; height: 2px; background: #76b9ed; }
.current::after { right: 0; left: 0; }
.tray { display: flex; align-items: center; height: 40px; margin-left: auto; gap: 8px; }
.clock { display: flex; flex-direction: column; align-items: center; width: 56px; line-height: 18px; }
.note { padding: 0 10px 0 9px; }
.peek { width: 5px; height: 40px; border-left: 1px solid #666; }
.watermark { position: absolute; right: 63px; bottom: 73px; color: #b8b8b8; font-size: 14px; pointer-events: none; }
.watermark .big { font-size: 19px; line-height: 26px; }
</style>
